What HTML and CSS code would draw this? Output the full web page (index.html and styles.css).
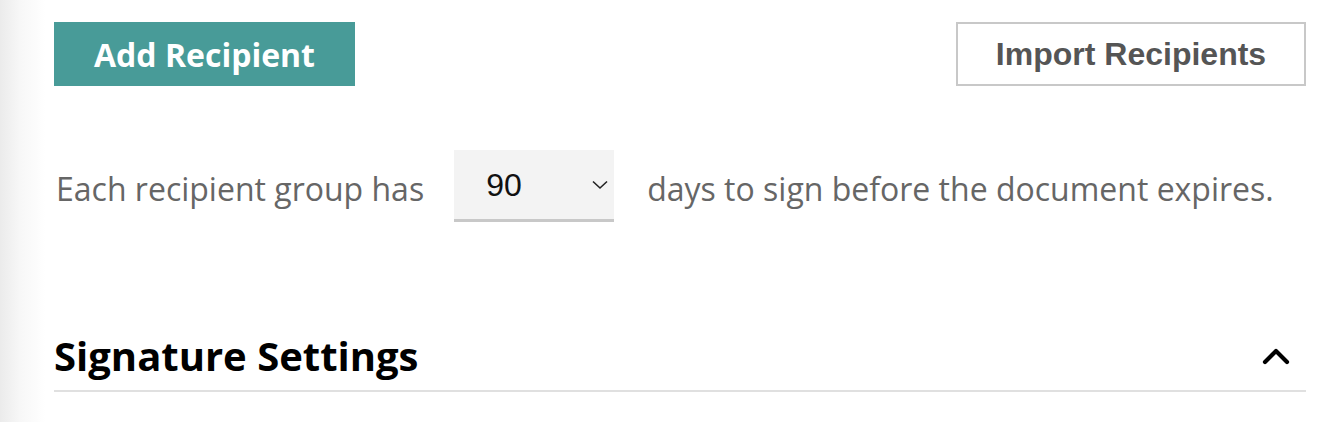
FILE: index.html
```html
<!DOCTYPE html>
<html lang="en">
<head>
    <meta charset="UTF-8">
    <title>Recipients</title>
    <link rel="stylesheet" href="styles.css">
</head>
<body>
    <div id="main">
        <div class="actions">
            <button class="btn-add">Add Recipient</button>
            <button class="btn-import">Import Recipients</button>
        </div>
        <div class="expire">
            <span class="txt">Each recipient group has</span>
            <div class="select">
                <span class="value">90</span>
                <svg class="arrow" width="16" height="10" viewBox="0 0 16 10"><polyline points="1,1.5 8,8 15,1.5" fill="none" stroke="#222" stroke-width="1.6"/></svg>
            </div>
            <span class="txt">days to sign before the document expires.</span>
        </div>
        <div class="section-head">
            <h2>Signature Settings</h2>
            <svg class="caret" width="28" height="18" viewBox="0 0 28 18"><polyline points="3,15 14,4 25,15" fill="none" stroke="#000" stroke-width="4.2" stroke-linecap="round" stroke-linejoin="round"/></svg>
        </div>
    </div>
</body>
</html>
```

FILE: styles.css
```css
*{
    margin: 0;
    padding: 0;
}
body{
    background: linear-gradient(to right, #ebebeb 0, #f7f7f7 20px, #fff 45px);
    font-family: "Open Sans", sans-serif;
    height: 422px;
}
#main{
    width: 1252px;
    margin-left: 54px;
    padding-top: 22px;
}
.actions{
    display: flex;
    justify-content: space-between;
}
.actions button{
    height: 64px;
    cursor: pointer;
}
.btn-add{
    width: 301px;
    background: #489b98;
    color: #fff;
    border: none;
    font-family: "Open Sans", sans-serif;
    font-weight: 700;
    font-size: 32px;
}
.btn-import{
    width: 350px;
    background: #fff;
    color: #555;
    border: 2px solid #c8c8c8;
    font-family: "Liberation Sans", Arial, sans-serif;
    font-weight: 700;
    font-size: 32px;
}
.expire{
    display: flex;
    align-items: center;
    margin-top: 64px;
    padding-left: 2px;
    color: #666;
    font-size: 32px;
}
.expire .txt{
    padding-top: 5px;
}
.select{
    display: flex;
    align-items: center;
    justify-content: space-between;
    width: 122px;
    height: 69px;
    margin: 0 33px 0 30px;
    padding: 0 6px 0 32px;
    background: #f3f3f3;
    border-bottom: 3px solid #c8c8c8;
}
.select .value{
    font-family: "Liberation Sans", Arial, sans-serif;
    font-size: 32px;
    color: #111;
    padding-top: 2px;
}
.section-head{
    display: flex;
    align-items: center;
    justify-content: space-between;
    margin-top: 106px;
    padding-bottom: 6px;
    border-bottom: 2px solid #e0e0e0;
}
.section-head h2{
    font-size: 40px;
    font-weight: 700;
    color: #000;
    line-height: 56px;
}
.caret{
    margin-right: 16px;
}
```
